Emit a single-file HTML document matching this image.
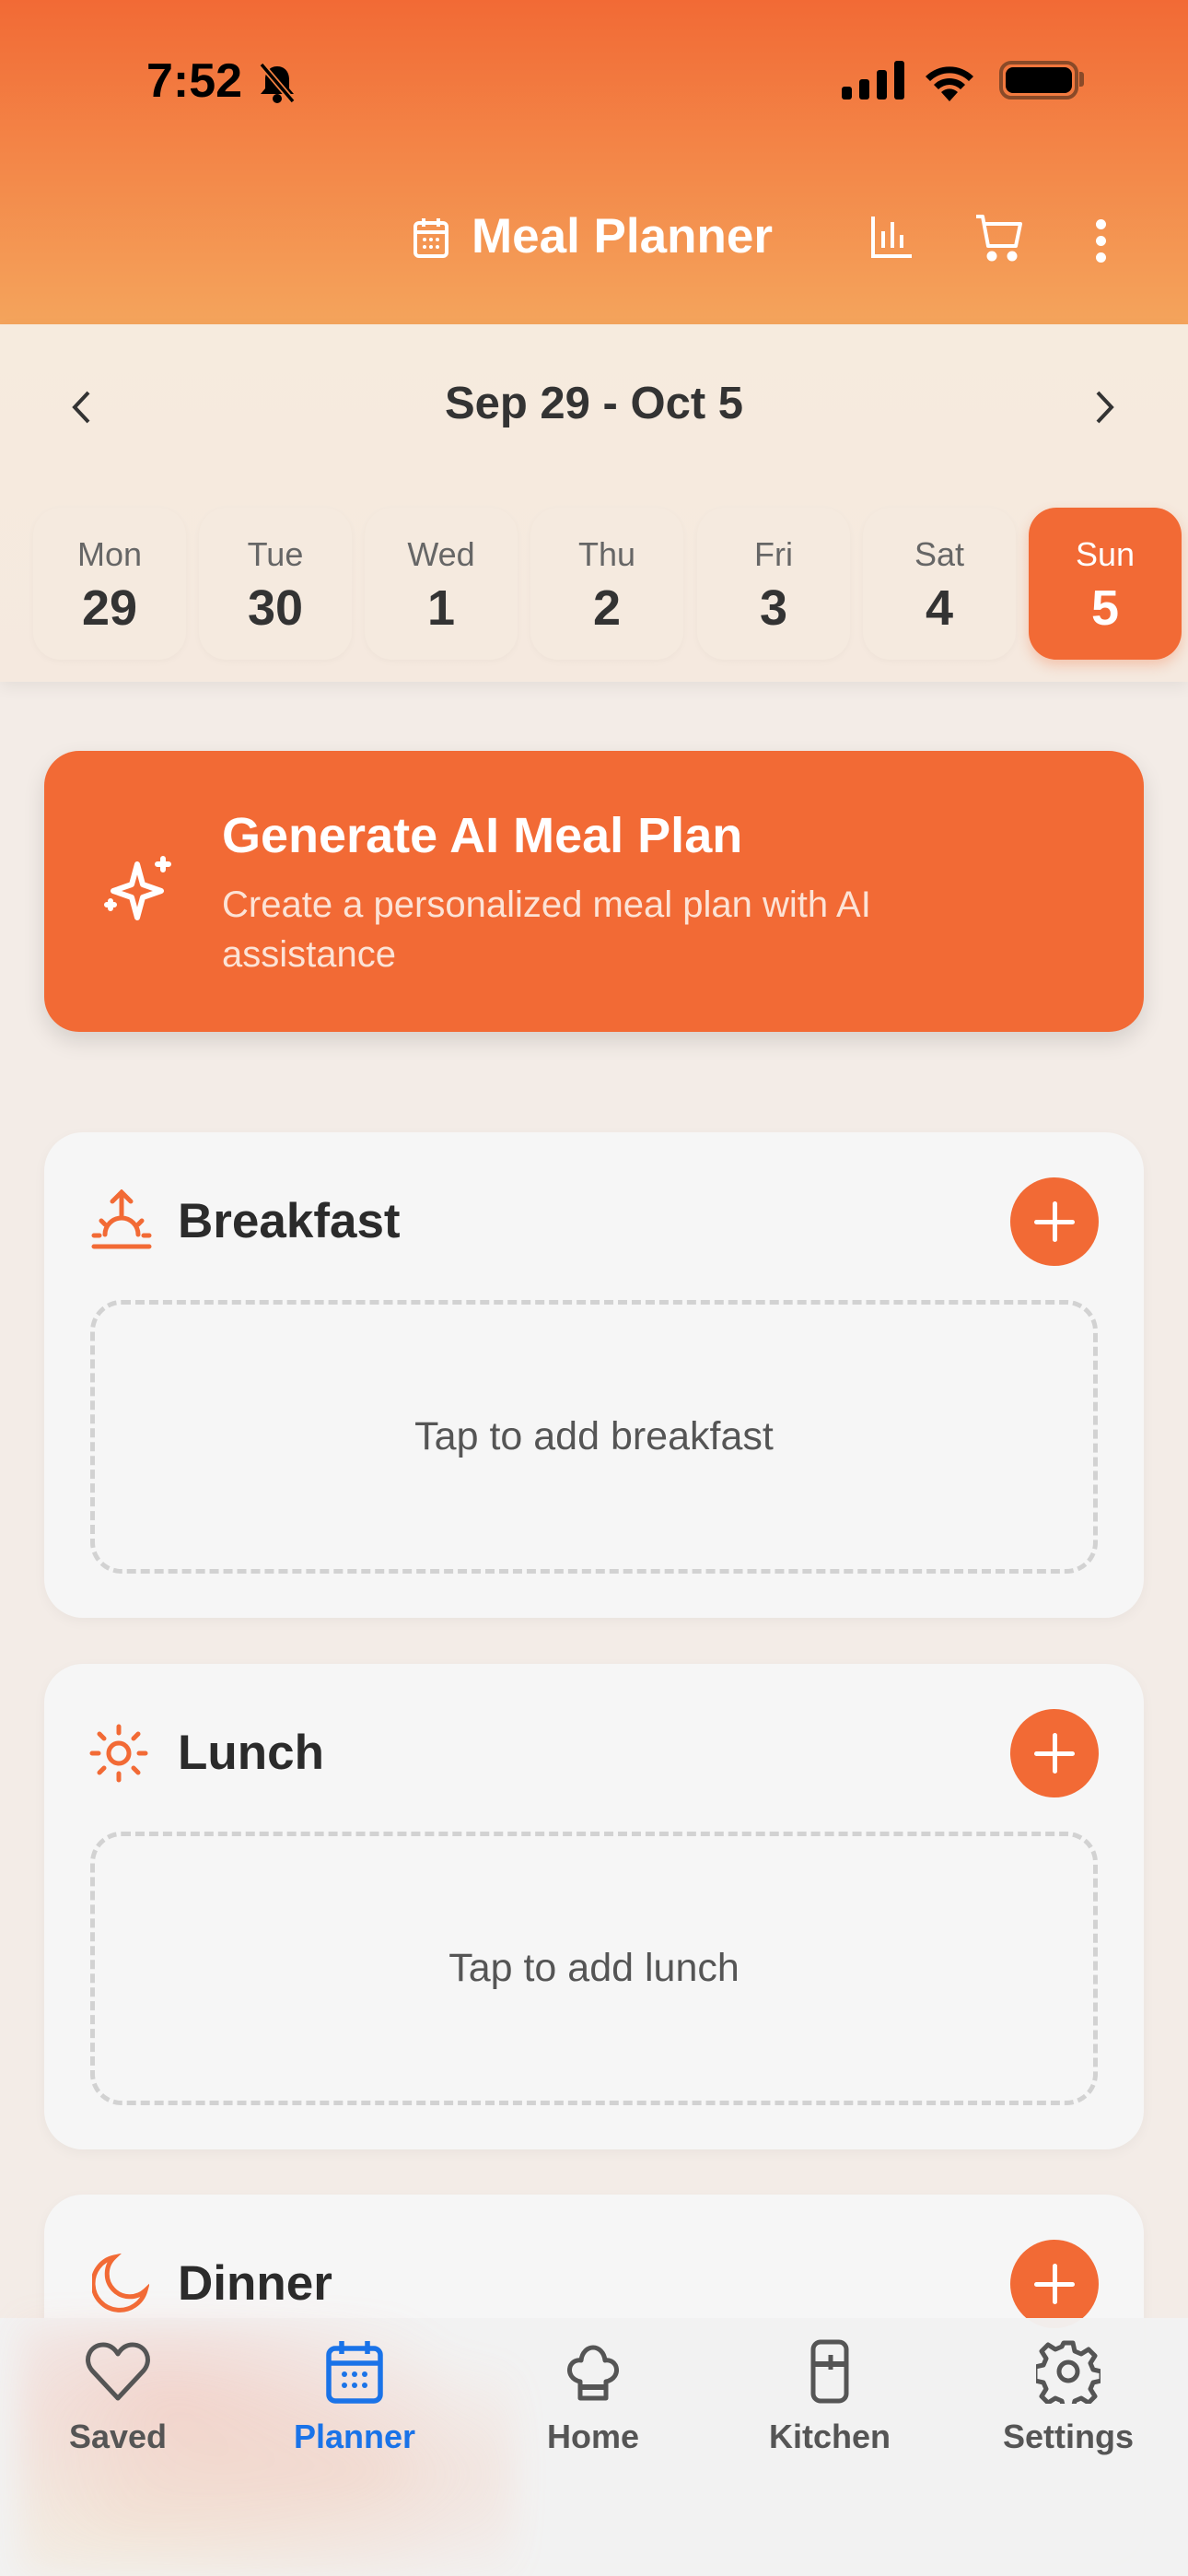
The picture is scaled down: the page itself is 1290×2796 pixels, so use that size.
<!DOCTYPE html>
<html style="width:1290px;height:2796px;overflow:hidden"><head><meta charset="utf-8">
<style>
*{margin:0;padding:0;box-sizing:border-box}
body{width:1290px;height:2796px;position:relative;overflow:hidden;background:#F3ECE7;font-family:"Liberation Sans",sans-serif;color:#2b2b2b}
.abs{position:absolute}
.hdr{left:0;top:0;width:1290px;height:352px;background:linear-gradient(180deg,#F26A35 0%,#F4A45C 100%)}
.week{left:0;top:352px;width:1290px;height:388px;background:linear-gradient(180deg,#F6EBDE,#F5E9DF);box-shadow:0 6px 16px rgba(0,0,0,.06)}
.day{top:551px;width:166px;height:165px;border-radius:30px;background:#F5EADF;box-shadow:0 2px 8px rgba(0,0,0,.03);text-align:center}
.day .n{font-size:36px;color:#666;margin-top:30px}
.day .d{font-size:54px;font-weight:bold;color:#333;margin-top:6px}
.sel{background:#F26A35;box-shadow:0 6px 14px rgba(242,106,53,.3)}
.sel .n,.sel .d{color:#fff}
.card{left:48px;width:1194px;height:527px;border-radius:42px;background:#F6F6F6;box-shadow:0 4px 14px rgba(0,0,0,.04)}
.ct{font-size:53px;font-weight:bold;color:#2b2b2b;left:145px;top:66px}
.plus{left:1049px;top:49px;width:96px;height:96px;border-radius:50%;background:#F26A35}
.plus:before,.plus:after{content:"";position:absolute;background:#fff;border-radius:3px;left:46px;top:26px;width:5px;height:44px}
.plus:after{left:26px;top:46px;width:44px;height:5px}
.dash{left:50px;top:182px;width:1094px;height:297px;border:5px dashed #D2D2D2;border-radius:34px;display:flex;align-items:center;justify-content:center;font-size:43px;color:#555}
.tab{left:0;top:2516px;width:1290px;height:280px;background:rgba(242,242,242,.97)}
.ti{width:200px;text-align:center;top:2538px}
.ti .ic{height:72px;display:flex;align-items:center;justify-content:center}
.ti .l{font-size:36px;font-weight:bold;color:#555;margin-top:14px}
</style></head><body>
<div class="abs hdr"></div>
<div class="abs" style="left:159px;top:58px;font-size:52px;font-weight:bold;color:#000">7:52</div>
<svg class="abs" style="left:278px;top:68px" width="46" height="44" viewBox="0 0 46 44"><path d="M23 4c-8 0-13 6-13 14v10l-5 6h36l-5-6V18c0-8-5-14-13-14z" fill="#000"/><circle cx="23" cy="39" r="5" fill="#000"/><path d="M6 2l34 40" stroke="#F28040" stroke-width="7"/><path d="M6 2l34 40" stroke="#000" stroke-width="3.5"/></svg>
<svg class="abs" style="left:914px;top:66px" width="70" height="42"><rect x="0" y="28" width="11" height="14" rx="3"/><rect x="19" y="20" width="11" height="22" rx="3"/><rect x="38" y="10" width="11" height="32" rx="3"/><rect x="57" y="0" width="11" height="42" rx="3"/></svg>
<svg class="abs" style="left:1002px;top:64px" width="58" height="46" viewBox="0 0 58 46"><path d="M29 46L20 36a13 13 0 0 1 18 0z"/><path d="M12 28a24 24 0 0 1 34 0l-5 5a17 17 0 0 0-24 0z"/><path d="M3 19a37 37 0 0 1 52 0l-5 5a30 30 0 0 0-42 0z"/></svg>
<div class="abs" style="left:1085px;top:66px;width:86px;height:42px;border:4px solid #8a4a28;border-radius:13px;padding:3px"><div style="width:100%;height:100%;background:#000;border-radius:8px"></div></div>
<div class="abs" style="left:1172px;top:78px;width:5px;height:16px;background:#8a4a28;border-radius:0 3px 3px 0"></div>

<svg class="abs" style="left:448px;top:235px" width="40" height="46" viewBox="0 0 40 46" fill="none" stroke="#fff" stroke-width="4"><rect x="3" y="7" width="34" height="36" rx="4"/><path d="M3 17h34M12 2v9M28 2v9"/><g fill="#fff" stroke="none"><circle cx="13" cy="25" r="2"/><circle cx="20" cy="25" r="2"/><circle cx="27" cy="25" r="2"/><circle cx="13" cy="33" r="2"/><circle cx="20" cy="33" r="2"/><circle cx="27" cy="33" r="2"/></g></svg>
<div class="abs" style="left:512px;top:226px;font-size:53px;font-weight:bold;color:#fff">Meal Planner</div>
<svg class="abs" style="left:945px;top:233px" width="46" height="48" fill="none" stroke="#fff" stroke-width="4"><path d="M3 2v43h42M14 36V18M24 36V8M34 36V22"/></svg>
<svg class="abs" style="left:1058px;top:232px" width="54" height="52" fill="none" stroke="#fff" stroke-width="4" stroke-linejoin="round"><path d="M2 3h7l6 32h30l5-24H12"/><circle cx="19" cy="46" r="3.5" fill="#fff"/><circle cx="41" cy="46" r="3.5" fill="#fff"/></svg>
<div class="abs" style="left:1190px;top:238px;width:11px;height:11px;border-radius:50%;background:#fff;box-shadow:0 18px 0 #fff,0 36px 0 #fff"></div>

<div class="abs week"></div>
<svg class="abs" style="left:76px;top:424px" width="24" height="36" fill="none" stroke="#333" stroke-width="4"><path d="M20 2L5 18l15 16"/></svg>
<svg class="abs" style="left:1188px;top:424px" width="24" height="36" fill="none" stroke="#333" stroke-width="4"><path d="M4 2l15 16L4 34"/></svg>
<div class="abs" style="left:0;width:1290px;top:410px;text-align:center;font-size:49px;font-weight:bold;color:#333">Sep 29 - Oct 5</div>

<div class="abs day" style="left:36px"><div class="n">Mon</div><div class="d">29</div></div>
<div class="abs day" style="left:216px"><div class="n">Tue</div><div class="d">30</div></div>
<div class="abs day" style="left:396px"><div class="n">Wed</div><div class="d">1</div></div>
<div class="abs day" style="left:576px"><div class="n">Thu</div><div class="d">2</div></div>
<div class="abs day" style="left:757px"><div class="n">Fri</div><div class="d">3</div></div>
<div class="abs day" style="left:937px"><div class="n">Sat</div><div class="d">4</div></div>
<div class="abs day sel" style="left:1117px"><div class="n">Sun</div><div class="d">5</div></div>

<div class="abs" style="left:48px;top:815px;width:1194px;height:305px;border-radius:38px;background:#F26A35;box-shadow:0 10px 24px rgba(0,0,0,.12)"></div>
<svg class="abs" style="left:110px;top:928px" width="80" height="80" viewBox="0 0 80 80" fill="none" stroke="#fff" stroke-width="6" stroke-linejoin="round" stroke-linecap="round"><path d="M39 10l6 22 20 7-20 7-6 22-6-22-20-7 20-7z"/><path d="M67 4v12M61 10h12M10 50v8M6 54h8"/></svg>
<div class="abs" style="left:241px;top:876px;font-size:54px;font-weight:bold;color:#fff">Generate AI Meal Plan</div>
<div class="abs" style="left:241px;top:955px;font-size:40px;color:#FCE3D6;line-height:54px;width:820px">Create a personalized meal plan with AI assistance</div>

<div class="abs card" style="top:1229px">
<svg class="abs" style="left:50px;top:62px" width="68" height="66" viewBox="0 0 68 66" fill="none" stroke="#F26A35" stroke-width="5" stroke-linecap="round"><path d="M34 28V4M24 13l10-10 10 10M16 49a18 18 0 0 1 36 0M4 50h6M58 50h6M12 34l4 4M56 34l-4 4M4 62h60"/></svg>
<div class="abs ct">Breakfast</div><div class="abs plus"></div>
<div class="abs dash">Tap to add breakfast</div></div>

<div class="abs card" style="top:1806px">
<svg class="abs" style="left:48px;top:64px" width="66" height="66" viewBox="0 0 66 66" fill="none" stroke="#F26A35" stroke-width="5" stroke-linecap="round"><circle cx="33" cy="33" r="11"/><path d="M33 4v7M33 55v7M4 33h7M55 33h7M12 12l5 5M49 49l5 5M12 54l5-5M49 17l5-5"/></svg>
<div class="abs ct">Lunch</div><div class="abs plus"></div>
<div class="abs dash">Tap to add lunch</div></div>

<div class="abs card" style="top:2382px;height:400px">
<svg class="abs" style="left:52px;top:64px" width="62" height="66" viewBox="0 0 62 66" fill="none" stroke="#F26A35" stroke-width="5"><path d="M24 4A29 29 0 1 0 58 40 22 22 0 0 1 24 4z"/></svg>
<div class="abs ct">Dinner</div><div class="abs plus"></div></div>

<div class="abs tab"></div>
<div class="abs" style="left:20px;top:2520px;width:540px;height:276px;opacity:.6;background:radial-gradient(ellipse at 30% 30%,rgba(240,150,130,.5),transparent 60%),radial-gradient(ellipse at 70% 60%,rgba(240,170,140,.45),transparent 60%),radial-gradient(ellipse at 20% 80%,rgba(245,200,150,.4),transparent 60%);filter:blur(18px)"></div>

<div class="abs ti" style="left:28px"><div class="ic"><svg width="72" height="66" viewBox="0 0 72 66" fill="none" stroke="#555" stroke-width="5" stroke-linejoin="round"><path d="M36 62L8 32C-2 20 6 4 20 4c8 0 13 5 16 10 3-5 8-10 16-10 14 0 22 16 12 28z"/></svg></div><div class="l">Saved</div></div>
<div class="abs ti" style="left:285px"><div class="ic"><svg width="66" height="70" viewBox="0 0 66 70" fill="none" stroke="#1A73E8" stroke-width="5.5"><rect x="5" y="10" width="56" height="57" rx="7"/><path d="M5 26h56M19 2v14M47 2v14"/><g fill="#1A73E8" stroke="none"><circle cx="22" cy="38" r="3"/><circle cx="33" cy="38" r="3"/><circle cx="44" cy="38" r="3"/><circle cx="22" cy="50" r="3"/><circle cx="33" cy="50" r="3"/><circle cx="44" cy="50" r="3"/></g></svg></div><div class="l" style="color:#1A73E8">Planner</div></div>
<div class="abs ti" style="left:544px"><div class="ic"><svg width="66" height="70" viewBox="0 0 66 70" fill="none" stroke="#555" stroke-width="5" stroke-linejoin="round"><path d="M19 64V46C10 44 6 37 8 30c2-6 8-8 12-7 1-9 7-14 13-14s12 5 13 14c4-1 10 1 12 7 2 7-2 14-11 16v18z"/><path d="M19 52h28" stroke-width="6"/></svg></div><div class="l">Home</div></div>
<div class="abs ti" style="left:801px"><div class="ic"><svg width="54" height="72" viewBox="0 0 54 72" fill="none" stroke="#555" stroke-width="5"><rect x="9" y="4" width="36" height="64" rx="8"/><path d="M9 28h36" stroke-width="6"/><path d="M28 18v16"/></svg></div><div class="l">Kitchen</div></div>
<div class="abs ti" style="left:1060px"><div class="ic"><svg width="70" height="70" viewBox="0 0 70 70" fill="none" stroke="#555" stroke-width="5" stroke-linejoin="round"><path d="M30 4h10l2 9 7 3 8-5 7 7-5 8 3 7 9 2v10l-9 2-3 7 5 8-7 7-8-5-7 3-2 9H30l-2-9-7-3-8 5-7-7 5-8-3-7-9-2V30l9-2 3-7-5-8 7-7 8 5 7-3z"/><circle cx="35" cy="35" r="10"/></svg></div><div class="l">Settings</div></div>
</body></html>
